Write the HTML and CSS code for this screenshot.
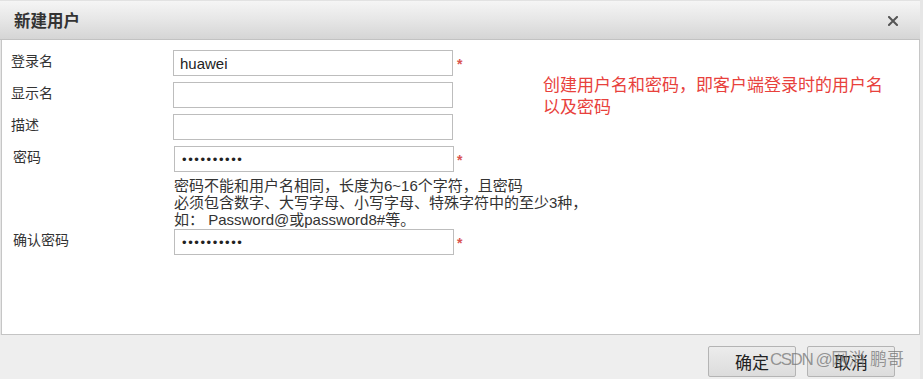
FILE: index.html
```html
<!DOCTYPE html>
<html lang="zh-CN">
<head>
<meta charset="utf-8">
<title>新建用户</title>
<link rel="stylesheet" href="styles.css">
</head>
<body>
<div class="dialog">
  <div class="header">
    <span class="title">新建用户</span>
    <svg class="close" width="10" height="10" viewBox="0 0 10 10"><path d="M1 1L9 9M9 1L1 9" stroke="#555" stroke-width="2" stroke-linecap="square"/></svg>
  </div>
  <div class="content">
    <div class="form">
      <div class="note">创建用户名和密码，即客户端登录时的用户名<br>以及密码</div>

      <label class="lbl">登录名</label>
      <input class="field" type="text" value="huawei">
      <span class="req">*</span>

      <label class="lbl">显示名</label>
      <input class="field" type="text" value="">

      <label class="lbl">描述</label>
      <input class="field" type="text" value="">

      <label class="lbl lbl-shift">密码</label>
      <input class="field field-shift field-pw" type="password" value="1234567890">
      <span class="req">*</span>

      <div class="help">密码不能和用户名相同，长度为6~16个字符，且密码<br>必须包含数字、大写字母、小写字母、特殊字符中的至少3种，<br>如： Password@或password8#等。</div>

      <label class="lbl lbl-shift">确认密码</label>
      <input class="field field-shift" type="password" value="1234567890">
      <span class="req">*</span>
    </div>
  </div>
  <div class="footer">
    <button class="btn">确定</button>
    <button class="btn">取消</button>
    <span class="watermark"><span class="wm-latin">CSDN @</span>网消 鹏哥</span>
  </div>
</div>
</body>
</html>
```

FILE: styles.css
```css
html, body {
  margin: 0;
  padding: 0;
}
body {
  width: 923px;
  height: 379px;
  overflow: hidden;
  background: #e6e6e6;
  font-family: "Liberation Sans", "Noto Sans CJK SC", sans-serif;
  color: #333;
}
.dialog {
  width: 920px;
  height: 379px;
  display: flex;
  flex-direction: column;
}
.header {
  box-sizing: border-box;
  height: 40px;
  flex: 0 0 40px;
  border-top: 1px solid #e2e2e2;
  border-bottom: 1px solid #c2c2c2;
  background: linear-gradient(to bottom, #f5f5f5 0%, #e6e6e6 50%, #d5d5d5 100%);
  display: flex;
  align-items: center;
  justify-content: space-between;
  padding: 0 22px 0 14px;
}
.title {
  font-size: 16.5px;
  font-weight: bold;
  color: #333;
  font-family: "Noto Sans CJK SC", sans-serif;
}
.close {
  display: block;
  margin-top: 1px;
}
.content {
  flex: 0 0 295px;
  box-sizing: border-box;
  margin-left: 1px;
  border-left: 1px solid #c6c6c6;
  border-right: 1px solid #c6c6c6;
  border-bottom: 1px solid #c4c4c4;
  background: #fff;
  padding-top: 10px;
}
.form {
  display: grid;
  grid-template-columns: 171px 280px 90px 1fr;
  align-items: start;
}
.note {
  grid-column: 4;
  grid-row: 1 / span 3;
  padding-top: 23px;
  font-size: 17px;
  line-height: 22px;
  color: #e8413c;
  font-family: "Noto Sans CJK SC", sans-serif;
}
.lbl {
  grid-column: 1;
  font-size: 14px;
  line-height: 20px;
  padding-left: 9px;
  color: #333;
  font-family: "Noto Sans CJK SC", sans-serif;
}
.lbl-shift {
  padding-left: 11px;
}
.field {
  grid-column: 2;
  box-sizing: border-box;
  width: 280px;
  height: 26px;
  margin: 0 0 6px 0;
  border: 1px solid #bdbdbd;
  padding: 0 6px;
  font-family: "Liberation Sans", "Noto Sans CJK SC", sans-serif;
  font-size: 15px;
  color: #222;
  background: #fff;
  outline: none;
}
.field-shift {
  margin-left: 1px;
}
.field[type="password"] {
  font-size: 13px;
  letter-spacing: 1.6px;
  padding-left: 7px;
}
.field-pw {
  margin-bottom: 5px;
}
.req {
  grid-column: 3;
  padding-left: 4px;
  padding-top: 4px;
  font-size: 14px;
  font-weight: bold;
  line-height: 20px;
  color: #d9534f;
}
.help {
  grid-column: 2 / span 2;
  margin-left: 1px;
  margin-bottom: 1px;
  font-size: 15px;
  line-height: 17px;
  color: #333;
  white-space: nowrap;
}
.footer {
  flex: 1 1 auto;
  position: relative;
  background: #eeeeee;
  display: flex;
  justify-content: flex-end;
  align-items: flex-start;
  gap: 11px;
  padding: 11px 25px 0 0;
}
.btn {
  width: 88px;
  height: 31px;
  box-sizing: border-box;
  border: 1px solid #b4b4b4;
  border-radius: 2px;
  background: linear-gradient(to bottom, #ececec, #dcdcdc);
  font-family: "Noto Sans CJK SC", sans-serif;
  font-size: 17px;
  color: #222;
  padding: 0;
}
.watermark {
  position: absolute;
  left: 770px;
  top: 14px;
  font-size: 17px;
  line-height: 22px;
  color: rgba(110, 110, 110, 0.7);
  white-space: nowrap;
  font-family: "Liberation Sans", "Noto Sans CJK SC", sans-serif;
}
.wm-latin {
  letter-spacing: -1.5px;
}
```
